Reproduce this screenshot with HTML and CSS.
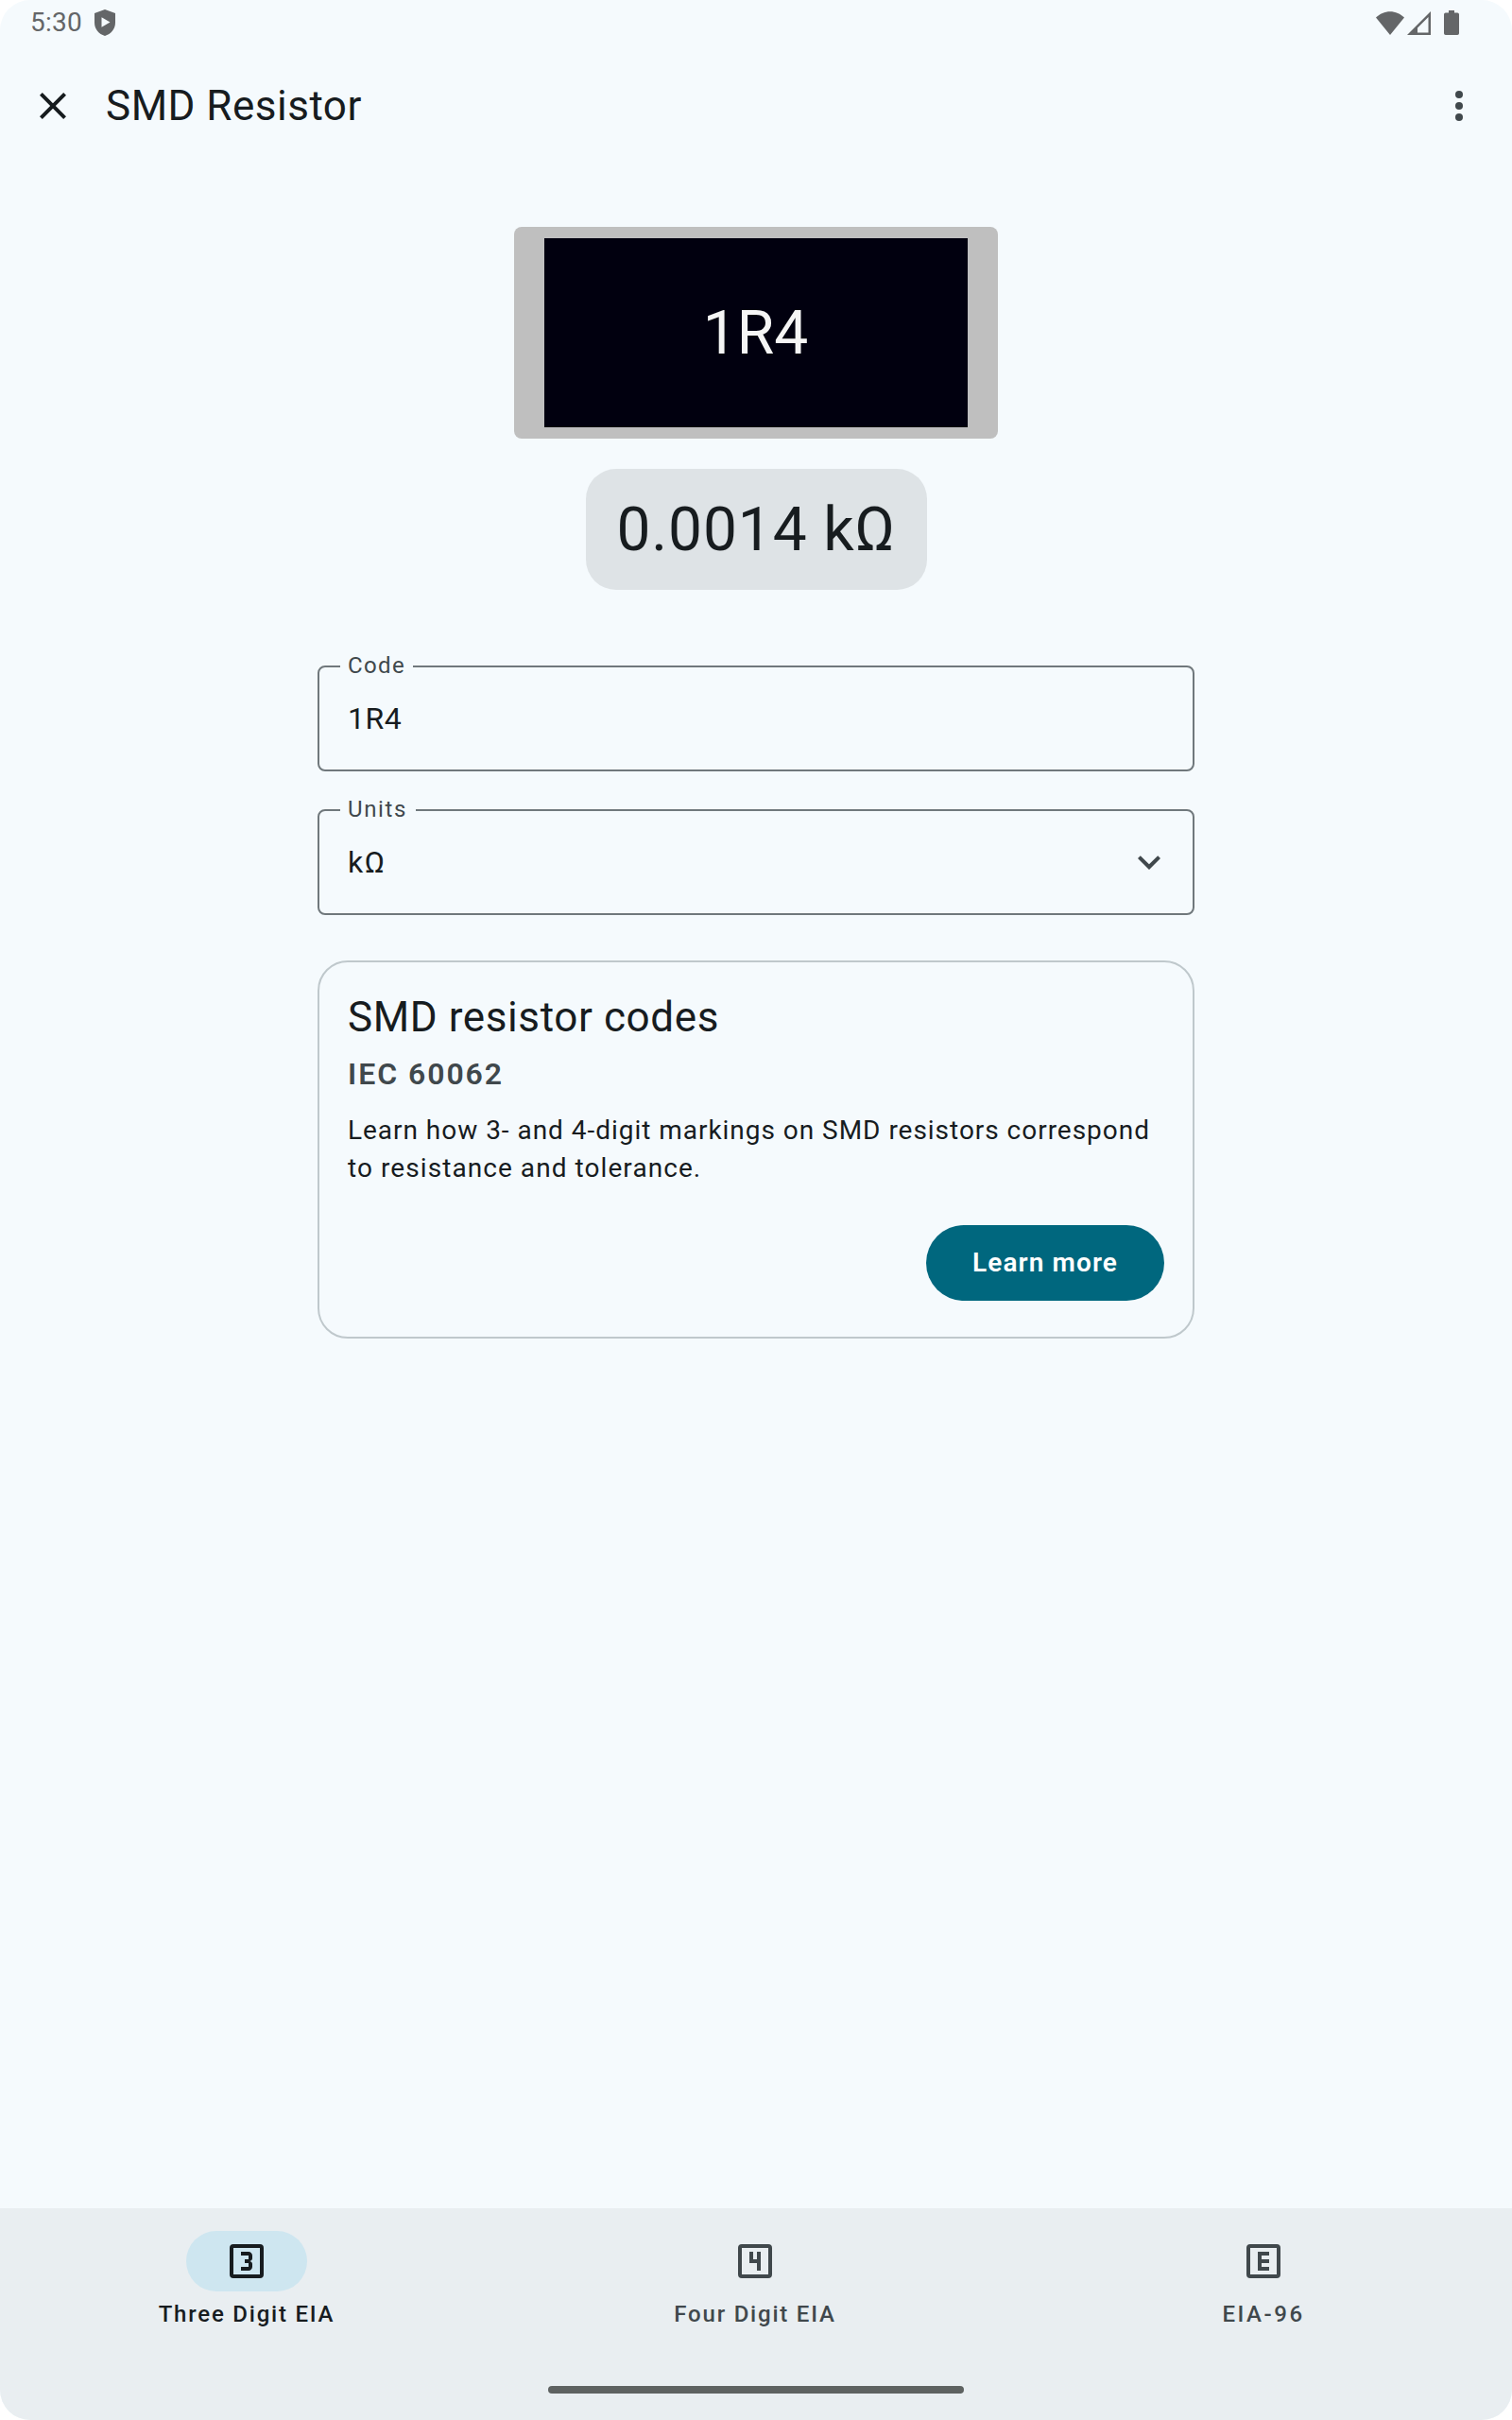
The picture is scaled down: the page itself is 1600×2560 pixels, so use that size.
FILE: index.html
```html
<!DOCTYPE html>
<html lang="en">
<head>
<meta charset="utf-8">
<title>SMD Resistor</title>
<link rel="stylesheet" href="styles.css">
</head>
<body>
<div class="screen">
  <div class="status-bar">
    <div class="status-left">
      <span class="time">5:30</span>
      <svg class="shield" width="22" height="28" viewBox="0 0 22 28"><path fill="currentColor" fill-rule="evenodd" d="M11 0 22 4V14C22 20.500 17.500 26 11 28 4.500 26 0 20.500 0 14V4zM7.500 8.300V18.700L16.500 13.500z"/></svg>
    </div>
    <div class="status-right">
      <svg width="30" height="25" viewBox="0 0 30 25"><path fill="currentColor" d="M15 25 0 6.500C4 2.500 9.500.2 15 .2S26 2.500 30 6.500z"/></svg>
      <svg class="signal" width="25" height="25" viewBox="0 0 25 25"><path fill="currentColor" fill-rule="evenodd" d="M25 0V25H0zM22.500 6 11 17.500V22.500H22.500z"/></svg>
      <svg class="battery" width="16" height="26" viewBox="0 0 16 26"><path fill="currentColor" d="M5 0h6v2.500h3.200q1.800 0 1.800 1.800v19.900q0 1.800-1.800 1.800H1.800Q0 26 0 24.200V4.300q0-1.800 1.800-1.800H5z"/></svg>
    </div>
  </div>

  <header class="app-bar">
    <svg width="48" height="48" viewBox="0 0 24 24"><path fill="currentColor" d="M19 6.410 17.590 5 12 10.590 6.410 5 5 6.410 10.590 12 5 17.590 6.410 19 12 13.410 17.590 19 19 17.590 13.410 12z"/></svg>
    <h1 class="title">SMD Resistor</h1>
    <svg class="more" width="48" height="48" viewBox="0 0 24 24" fill="currentColor"><circle cx="12" cy="6" r="2"/><circle cx="12" cy="12" r="2"/><circle cx="12" cy="18" r="2"/></svg>
  </header>

  <main class="content">
    <div class="chip"><div class="chip-body">1R4</div></div>
    <div class="result">0.0014 kΩ</div>

    <fieldset class="field">
      <legend class="legend">Code</legend>
      <div class="field-row"><span class="field-value">1R4</span></div>
    </fieldset>
    <fieldset class="field">
      <legend class="legend units-legend">Units</legend>
      <div class="field-row">
        <span class="field-value ohm">kΩ</span>
        <svg class="chevron" width="48" height="48" viewBox="0 0 24 24"><path fill="currentColor" d="M7.410 8.590 12 13.170l4.590-4.580L18 10l-6 6-6-6z"/></svg>
      </div>
    </fieldset>

    <section class="card">
      <h2 class="card-title">SMD resistor codes</h2>
      <div class="card-subtitle">IEC 60062</div>
      <p class="card-text">Learn how 3- and 4-digit markings on SMD resistors correspond<br><span class="card-text-end">to resistance and tolerance.</span></p>
      <button class="button">Learn more</button>
    </section>
  </main>

  <nav class="nav">
    <div class="nav-items">
      <div class="nav-item active">
        <div class="indicator"><svg width="48" height="48" viewBox="0 0 24 24"><rect x="4" y="4" width="16" height="16" rx="1" fill="none" stroke="currentColor" stroke-width="2"/><path fill="currentColor" d="M15 15v-1.500c0-.83-.67-1.500-1.500-1.500.83 0 1.500-.67 1.500-1.500V9c0-1.110-.9-2-2-2H9v2h4v2h-2v2h2v2H9v2h4c1.100 0 2-.89 2-2z"/></svg></div>
        <span class="nav-label">Three Digit EIA</span>
      </div>
      <div class="nav-item">
        <div class="indicator"><svg width="48" height="48" viewBox="0 0 24 24"><rect x="4" y="4" width="16" height="16" rx="1" fill="none" stroke="currentColor" stroke-width="2"/><path fill="currentColor" d="M9 7v6h4v4h2V7h-2v4h-2V7z"/></svg></div>
        <span class="nav-label">Four Digit EIA</span>
      </div>
      <div class="nav-item">
        <div class="indicator"><svg width="48" height="48" viewBox="0 0 24 24"><rect x="4" y="4" width="16" height="16" rx="1" fill="none" stroke="currentColor" stroke-width="2"/><path fill="currentColor" d="M9 7v10h6v-2h-4v-2h4v-2h-4V9h4V7z"/></svg></div>
        <span class="nav-label short">EIA-96</span>
      </div>
    </div>
    <div class="handle"></div>
  </nav>
</div>
</body>
</html>
```
FILE: styles.css
```css
* { box-sizing: border-box; }
body { margin: 0; background: #fff; font-family: Roboto, "Liberation Sans", sans-serif; color: #171c1f; }
svg { display: block; flex: none; }
h1, h2, p { margin: 0; font-weight: 400; }

.screen {
  width: 1600px;
  height: 2560px;
  display: flex;
  flex-direction: column;
  overflow: hidden;
  border-radius: 32px;
  background: #f5fafd;
}

.status-bar {
  height: 48px;
  padding: 0 56px 0 32px;
  display: flex;
  justify-content: space-between;
  align-items: center;
  color: #646668;
}
.status-left, .status-right { display: flex; align-items: center; }
.time { width: 68px; font-size: 28px; line-height: 48px; letter-spacing: .25px; }
.signal { margin-left: 3px; }
.battery { margin-left: 14px; }

.app-bar { height: 128px; padding: 0 32px; display: flex; align-items: center; }
.title { margin-left: 32px; font-size: 44px; line-height: 56px; letter-spacing: .5px; }
.more { margin-left: auto; color: #40484c; }

.content { flex: 1; padding-top: 64px; display: flex; flex-direction: column; align-items: center; }

.chip { width: 512px; height: 224px; padding: 12px 32px; border-radius: 8px; background: #bfbfbf; }
.chip-body {
  height: 200px;
  padding: 1px 1px 0 0;
  display: flex;
  align-items: center;
  justify-content: center;
  background: #01000f;
  color: #f5f5f5;
  font-size: 64px;
}
.result {
  width: 361px;
  height: 128px;
  margin-top: 32px;
  padding-left: 33px;
  border-radius: 32px;
  background: #dee3e6;
  font-size: 64px;
  line-height: 130px;
  letter-spacing: .88px;
  white-space: nowrap;
}

.field {
  width: 928px;
  height: 124px;
  margin: 28px 0 0;
  padding: 0;
  border: 2px solid #70787c;
  border-radius: 8px;
}
.result + .field { margin-top: 68px; }
.legend {
  margin-left: 22px;
  padding: 0 8px 2px 8px;
  color: #40484c;
  font-size: 24px;
  line-height: 24px;
  letter-spacing: 1.385px;
}
.units-legend { padding-right: 9px; letter-spacing: 1.62px; }
.field-row { height: 84px; padding: 0 22px 0 30px; display: flex; align-items: center; justify-content: space-between; }
.field-value { font-size: 32px; letter-spacing: .5px; }
.ohm { letter-spacing: 1.6px; }
.chevron { color: #40484c; }

.card {
  width: 928px;
  height: 400px;
  margin-top: 48px;
  padding: 30px;
  display: flex;
  flex-direction: column;
  border: 2px solid #bfc8cc;
  border-radius: 32px;
}
.card-title { font-size: 44px; line-height: 56px; letter-spacing: .6px; }
.card-subtitle { margin-top: 8px; color: #40484c; font-size: 32px; font-weight: 600; line-height: 48px; letter-spacing: 1.95px; }
.card-text { margin-top: 16px; font-size: 28px; line-height: 40px; letter-spacing: .97px; white-space: nowrap; }
.card-text-end { letter-spacing: 1.07px; }
.button {
  width: 252px;
  height: 80px;
  margin-top: 40px;
  padding: 0;
  align-self: flex-end;
  border: 0;
  border-radius: 40px;
  background: #00677e;
  color: #fff;
  font: 600 28px/80px Roboto, "Liberation Sans", sans-serif;
  letter-spacing: 1.1px;
}

.nav { height: 224px; background: #e9eef1; display: flex; flex-direction: column; align-items: center; }
.nav-items { width: 100%; height: 188px; padding: 24px 2px 0 0; display: grid; grid-template-columns: repeat(3, 1fr); column-gap: 16px; }
.nav-item { display: flex; flex-direction: column; align-items: center; color: #40484c; }
.indicator { width: 128px; height: 64px; display: flex; align-items: center; justify-content: center; border-radius: 32px; }
.active { color: #171c1f; }
.active .indicator { background: #cee6f0; }
.nav-label { margin-top: 8px; font-size: 24px; font-weight: 500; line-height: 32px; letter-spacing: 1.78px; }
.short { letter-spacing: 2.54px; }
.handle { width: 440px; height: 8px; border-radius: 4px; background: #5e6261; }
```
